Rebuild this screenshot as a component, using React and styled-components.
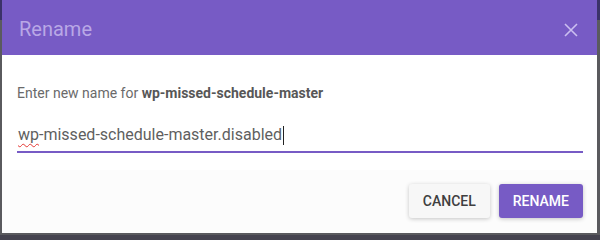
import React from "react";
import styled, { createGlobalStyle } from "styled-components";

const Global = createGlobalStyle`
  html, body { margin: 0; padding: 0; background: #45434f; }
  body { font-family: Roboto, "Noto Sans", Arial, sans-serif; overflow: hidden; }
`;

const Stage = styled.div`
  width: 600px;
  height: 235px;
  padding-left: 2px;
  box-sizing: border-box;
  background: linear-gradient(#3b3268 0 20px, #5a5a5e 20px);
`;

const Dialog = styled.div`
  width: 595px;
  height: 233px;
  background: #ffffff;
  display: flex;
  flex-direction: column;
`;

const Header = styled.header`
  height: 55px;
  flex: none;
  background: #775bc5;
  display: flex;
  align-items: center;
  justify-content: space-between;
  padding: 0 18px 0 17px;
  box-sizing: border-box;
`;

const Title = styled.h2`
  margin: 0;
  font-size: 20px;
  font-weight: 400;
  color: #b9a8e6;
  line-height: 24px;
  margin-top: 2px;
`;

const CloseButton = styled.button`
  border: 0;
  background: none;
  padding: 0;
  width: 16px;
  height: 16px;
  display: flex;
  margin-top: 4px;
  cursor: pointer;
`;

const Body = styled.div`
  padding: 28px 14px 17px 15px;
  display: flex;
  flex-direction: column;
  gap: 20px;
`;

const Label = styled.p`
  margin: 0;
  font-size: 14px;
  line-height: 20px;
  color: #6a6a6a;
  strong { color: #575757; font-weight: 700; }
`;

const Field = styled.div`
  font-size: 16px;
  line-height: 24px;
  color: #5f5f5f;
  padding: 0 0 4px 1px;
  border-bottom: 2px solid #775bc5;
  display: flex;
  align-items: center;
`;

const Misspelled = styled.span`
  text-decoration: underline wavy #e53935;
  text-decoration-thickness: 1px;
  text-underline-offset: 3px;
`;

const Caret = styled.span`
  display: inline-block;
  width: 1px;
  height: 19px;
  background: #222;
  margin-left: 1px;
`;

const Footer = styled.footer`
  flex: 1;
  background: #fcfcfc;
  display: flex;
  justify-content: flex-end;
  align-items: flex-start;
  gap: 9px;
  padding: 14px 14px 0 0;
`;

const Button = styled.button`
  height: 34px;
  padding: 0 14px;
  border: 0;
  border-radius: 3px;
  font-family: Roboto, Arial, sans-serif;
  font-size: 14px;
  font-weight: 500;
  letter-spacing: 0;
  text-transform: uppercase;
  background: ${(p) => (p.$primary ? "#775bc5" : "#f7f7f7")};
  color: ${(p) => (p.$primary ? "#ffffff" : "#3f3f3f")};
  box-shadow: 0 1px 4px rgba(0, 0, 0, 0.22);
  cursor: pointer;
`;

export default function App() {
  return (
    <>
      <Global />
      <Stage>
        <Dialog>
          <Header>
            <Title>Rename</Title>
            <CloseButton aria-label="Close">
              <svg width="16" height="16" viewBox="0 0 16 16">
                <path d="M2 2 L14 14 M14 2 L2 14" stroke="#cbbff0" strokeWidth="1.6" fill="none" />
              </svg>
            </CloseButton>
          </Header>
          <Body>
            <Label>
              Enter new name for <strong>wp-missed-schedule-master</strong>
            </Label>
            <Field>
              <span>
                <Misspelled>wp</Misspelled>-missed-schedule-master.disabled
              </span>
              <Caret />
            </Field>
          </Body>
          <Footer>
            <Button>Cancel</Button>
            <Button $primary>Rename</Button>
          </Footer>
        </Dialog>
      </Stage>
    </>
  );
}
